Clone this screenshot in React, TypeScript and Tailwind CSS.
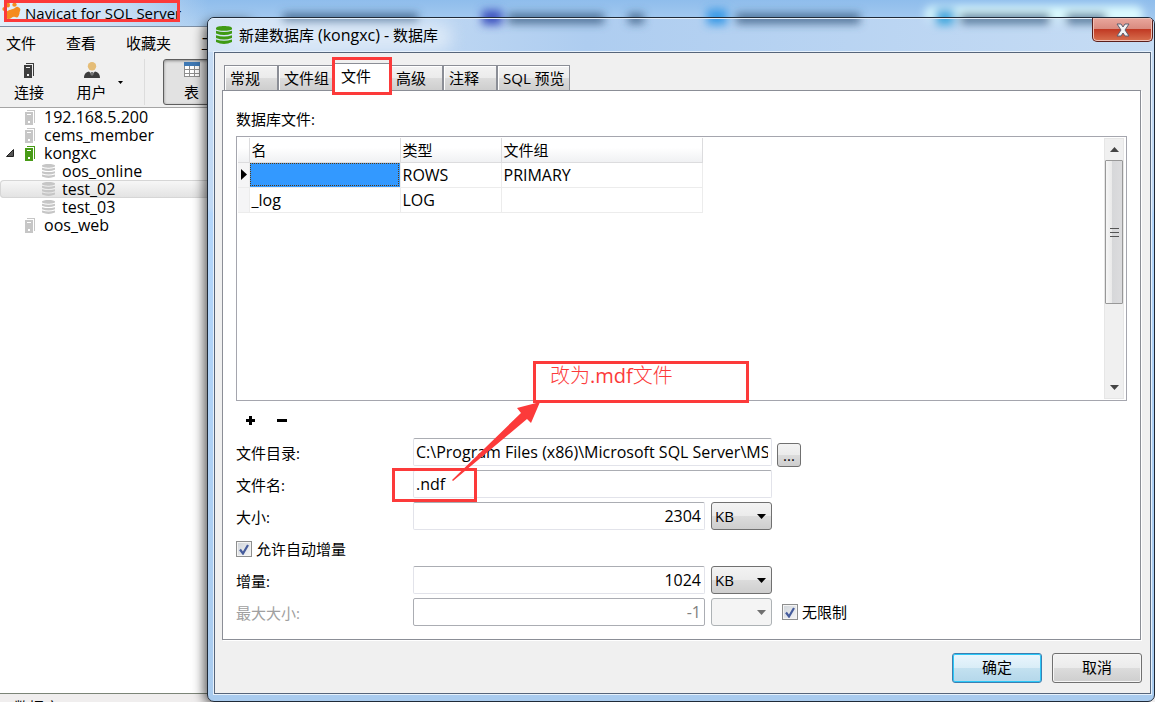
import React from 'react';
import clsx from 'clsx';

// --- Icons ---
const ServerIcon: React.FC<{ className?: string }> = ({ className }) => (
    <svg width="11" height="15" viewBox="0 0 11 15" className={clsx('shrink-0', className)} fill="currentColor">
        <path d="M2 0h8v13h-1V1H2z" />
        <path fillRule="evenodd" d="M0 2h8v13H0zM2 4v1h4V4zM3 11v2h2v-2z" />
    </svg>
);

const DatabaseIcon: React.FC<{ className?: string }> = ({ className }) => (
    <svg viewBox="0 0 16 18" preserveAspectRatio="none" className={clsx('shrink-0', className)} fill="currentColor">
        <path d="M0 2.200C0 -.7 16 -.7 16 2.200V3C16 5.400 0 5.400 0 3Z" />
        <path d="M0 4.800Q8 7.200 16 4.800V7.500Q8 10.500 0 7.500Z" />
        <path d="M0 9.200Q8 11.600 16 9.200V12Q8 15 0 12Z" />
        <path d="M0 13.600Q8 16 16 13.600V16Q8 19.800 0 16Z" />
    </svg>
);

const UserIcon = () => (
    <svg width="16" height="16" viewBox="0 0 16 16">
        <circle cx="8" cy="4.200" r="4.200" fill="#e5bd77" />
        <path d="M0 16c0-5 3-6 5-6.500l3 3 3-3c2 .5 5 1.500 5 6.500z" fill="#3d3d3d" />
        <path d="M7 10h2l1 2-2 2-2-2z" fill="#777" />
    </svg>
);

const TableIcon = () => (
    <svg width="16" height="15" viewBox="0 0 16 15" shapeRendering="crispEdges">
        <path d="M0 0h16v15H0z" fill="#8d8d8d" />
        <path d="M0 0h16v4H0z" fill="#3e78b4" />
        <path d="M1 4h4v3H1zM6 4h4v3H6zM11 4h4v3h-4zM1 8h4v3H1zM6 8h4v3H6zM11 8h4v3h-4zM1 12h4v2H1zM6 12h4v2H6zM11 12h4v2h-4z" fill="#fff" />
    </svg>
);

const LogoIcon = () => (
    <svg width="19" height="18" viewBox="0 0 19 18" className="shrink-0" fill="#f58b1f">
        <path d="M4 12c0-4 4-4 7-5s3-3 5-2 3 2 2 4 0 2-1 4-1 3-4 2-3 2-6 2-3-2-3-5z" />
        <ellipse cx="2.500" cy="7" rx="2.200" ry="2" />
        <ellipse cx="6" cy="3" rx="2" ry="2.500" />
        <ellipse cx="12.500" cy="2.800" rx="2.200" ry="2" />
    </svg>
);

const Caret: React.FC<{ className?: string }> = ({ className }) => (
    <svg width="9" height="5" viewBox="0 0 9 5" className={className} fill="currentColor">
        <path d="M0 0h9L4.500 5z" />
    </svg>
);

// Taskbar entries showing through the glass frame
const GlassSmears: React.FC<{ id: string; className: string; glow: number }> = ({ id, className, glow }) => (
    <svg width="1155" height="50" viewBox="0 0 1155 50" className={clsx('pointer-events-none absolute max-w-none', className)}>
        <defs>
            <filter id={id} filterUnits="userSpaceOnUse" x="0" y="-10" width="1155" height="60">
                <feGaussianBlur stdDeviation="4" />
            </filter>
        </defs>
        <g filter={`url(#${id})`}>
            <rect x="925" y="6" width="218" height="18" rx="8" fill="#dcfbff" opacity={glow} />
            <g fill="#34597f" opacity=".75">
                <rect x="283" y="13" width="135" height="11" />
                <rect x="508" y="13" width="96" height="11" />
                <rect x="628" y="13" width="16" height="11" />
                <rect x="736" y="13" width="124" height="11" />
                <rect x="960" y="13" width="90" height="11" />
                <rect x="1066" y="13" width="40" height="11" />
            </g>
            <rect x="482" y="10" width="20" height="15" fill="#3f55c0" />
            <rect x="707" y="9" width="20" height="16" fill="#3e9be6" />
            <rect x="935" y="9" width="20" height="16" fill="#45a9de" />
        </g>
    </svg>
);

// --- Main window ---
const MENUS = ['文件', '查看', '收藏夹', '工具'];

const TREE = [
    { name: '192.168.5.200', kind: 'server' },
    { name: 'cems_member', kind: 'server' },
    { name: 'kongxc', kind: 'server', open: true },
    { name: 'oos_online', kind: 'db' },
    { name: 'test_02', kind: 'db', selected: true },
    { name: 'test_03', kind: 'db' },
    { name: 'oos_web', kind: 'server' }
];

const MainWindow = () => (
    <div className="flex h-full flex-col">
        <div className="relative flex h-[27px] shrink-0 items-center gap-1 overflow-hidden border-b border-[#7d8fa5] bg-gradient-to-b from-[#8fbdec] to-[#aacdf0] pl-0.5">
            <GlassSmears id="smear-desktop" className="top-0 left-0" glow={1} />
            <div className="absolute top-0 left-0 h-full w-52 bg-gradient-to-r from-[#e3effa] via-[#cfe2f6] to-transparent"></div>
            <span className="relative pb-1"><LogoIcon /></span>
            <h1 className="relative text-[15px] leading-5 whitespace-nowrap">Navicat for SQL Server</h1>
        </div>
        <nav className="flex h-[31px] shrink-0 items-center gap-[30px] bg-[#f0f0f0] pl-1.5">
            {MENUS.map((m) => <button key={m} className="leading-5 whitespace-nowrap">{m}</button>)}
        </nav>
        <div className="flex h-[50px] shrink-0 items-start border-b border-[#a5a5a5] bg-[#f0f0f0] pt-px">
            <button className="flex h-[46px] w-[58px] flex-col items-center justify-between pt-1 pb-[3px]">
                <ServerIcon className="text-[#3d3d3d]" />
                <span className="leading-5">连接</span>
            </button>
            <button className="flex h-[46px] w-[67px] flex-col items-center justify-between pt-[3px] pb-[3px]">
                <UserIcon />
                <span className="leading-5">用户</span>
            </button>
            <button aria-label="用户菜单" className="-ml-2 flex h-[46px] w-7 items-center border-r border-[#dcdcdc] pl-px">
                <svg width="5" height="3" viewBox="0 0 5 3"><path d="M0 0h5L2.500 3z" /></svg>
            </button>
            <button className="ml-[18px] flex h-[46px] w-[57px] flex-col items-center justify-between rounded-[3px] border border-[#5e5e5e] bg-[#e2e2e2] pt-0.5 pb-0.5 shadow-[inset_0_1px_3px_#8a8a8a]">
                <TableIcon />
                <span className="leading-5">表</span>
            </button>
        </div>
        <ul className="flex-1 bg-white text-base">
            {TREE.map((node) => (
                <li
                    key={node.name}
                    className={clsx(
                        'flex h-[18px] items-center',
                        node.kind === 'db' ? 'gap-[7px] pl-[42px]' : 'pl-1.5',
                        node.selected && 'rounded-sm bg-gradient-to-b from-[#f8f8f8] to-[#e2e2e2] shadow-[inset_0_0_0_1px_#d6d6d6]'
                    )}
                >
                    {node.kind === 'db' ? (
                        <DatabaseIcon className="h-3.5 w-[13px] text-[#c6c6c6]" />
                    ) : (
                        <>
                            <span className="w-[19px]">
                                {node.open && <svg width="8" height="8" viewBox="0 0 8 8"><path d="M7.500.5v7h-7z" fill="#555" stroke="#222" /></svg>}
                            </span>
                            <ServerIcon className={clsx('mr-2', node.open ? 'text-[#489b17]' : 'text-[#c6c6c6]')} />
                        </>
                    )}
                    <span className="leading-[18px] whitespace-nowrap">{node.name}</span>
                </li>
            ))}
        </ul>
        <footer className="h-[9px] shrink-0 overflow-hidden border-t border-[#7c8578] bg-[#f0eeee] pt-[3px] pl-3.5 leading-5">数据库</footer>
    </div>
);

// --- Dialog ---
const TABS = ['常规', '文件组', '文件', '高级', '注释', 'SQL 预览'];
const TAB_WIDTHS = ['w-[54px]', 'w-[55px]', 'w-[57px]', 'w-[53px]', 'w-[54px]', 'w-[73px]'];
const FACE = 'bg-[linear-gradient(#f3f3f3,#ebebeb_50%,#dcdcdc_50%,#cecece)]';

const Tabs = () => (
    <div role="tablist" className="flex items-end pl-0.5">
        {TABS.map((t, i) => {
            const active = t === '文件';
            return (
                <button
                    key={t}
                    role="tab"
                    aria-selected={active}
                    className={clsx(
                        'border border-b-0 border-[#8b8e96] text-left leading-5 whitespace-nowrap',
                        TAB_WIDTHS[i],
                        active ? 'relative -mb-px h-7 bg-white pb-1 pl-[7px]' : ['h-[25px] pl-[5px] shadow-[inset_1px_1px_0_#fff]', FACE]
                    )}
                >
                    {t}
                </button>
            );
        })}
    </div>
);

const FileGrid = () => (
    <div className="flex min-h-0 flex-1 items-start border border-[#a5a6ae] p-px">
        <div className="flex-1">
            <table className="w-[464px] table-fixed border-collapse text-left">
                <colgroup>
                    <col className="w-[11px]" />
                    <col className="w-[151px]" />
                    <col className="w-[101px]" />
                    <col className="w-[201px]" />
                </colgroup>
                <thead>
                    <tr className="h-6 bg-gradient-to-b from-white from-40% to-[#f0f1f3] [&>th]:border-r [&>th]:border-b [&>th]:border-[#dcdcde] [&>th]:p-0 [&>th]:pl-0.5 [&>th]:font-normal">
                        <th></th>
                        <th>名</th>
                        <th>类型</th>
                        <th>文件组</th>
                    </tr>
                </thead>
                <tbody className="text-base [&_td]:border-r [&_td]:border-b [&_td]:border-[#ececec] [&_td]:p-0 [&_td]:pl-0.5 [&_td]:leading-5">
                    <tr className="h-[25px]">
                        <td className="bg-[#f5f5f6]"><svg width="7" height="11" viewBox="0 0 7 11" className="ml-px"><path d="M0 0l6 5.500L0 11z" /></svg></td>
                        <td className="bg-[#3399ff] outline-1 -outline-offset-2 outline-dotted outline-[#5b3a10]"></td>
                        <td>ROWS</td>
                        <td>PRIMARY</td>
                    </tr>
                    <tr className="h-[25px]">
                        <td className="bg-[#f5f5f6]"></td>
                        <td>_log</td>
                        <td>LOG</td>
                        <td></td>
                    </tr>
                </tbody>
            </table>
        </div>
        <div className="mr-px flex w-5 flex-col self-stretch border border-[#e6e6e6] bg-[#f0f0f0]">
            <button aria-label="向上" className="flex h-[21px] items-center justify-center"><Caret className="rotate-180 text-[#444]" /></button>
            <div className="flex h-36 flex-col items-center justify-center gap-[3px] rounded-[1px] border border-[#989898] bg-[linear-gradient(90deg,#f6f6f6,#eaeaea_35%,#d6d7d9_36%,#dcdcde)]">
                <i className="h-px w-[9px] bg-[#555]"></i>
                <i className="h-px w-[9px] bg-[#555]"></i>
                <i className="h-px w-[9px] bg-[#555]"></i>
            </div>
            <span className="flex-1"></span>
            <button aria-label="向下" className="flex h-[22px] items-center justify-center"><Caret className="text-[#444]" /></button>
        </div>
    </div>
);

const FIELD = 'h-7 rounded-[2px] border border-[#e2e3ea] border-t-[#abadb3] bg-white pr-[3px] pb-px pl-0.5 text-base';

const UnitSelect: React.FC<{ label: string; disabled?: boolean }> = ({ label, disabled }) => (
    <div className="grid w-[61px] items-center [&>*]:[grid-area:1/1]">
        <select
            aria-label={label}
            disabled={disabled}
            className={clsx('h-7 w-full appearance-none rounded-[3px] border pl-[3px] text-[15px]', disabled ? 'border-[#adb2b5] bg-[#f4f4f4]' : ['border-[#707070]', FACE])}
        >
            <option>{disabled ? '' : 'KB'}</option>
        </select>
        <Caret className={clsx('pointer-events-none mr-1.5 justify-self-end', disabled && 'text-[#707070]')} />
    </div>
);

const Check: React.FC<{ label: string }> = ({ label }) => (
    <label className="flex items-center gap-1">
        <span className="grid size-4 place-items-center [&>*]:[grid-area:1/1]">
            <input type="checkbox" defaultChecked className="peer size-4 appearance-none border border-[#8e8f8f] bg-gradient-to-br from-[#cfd4da] to-[#f6f6f6] shadow-[inset_0_0_0_1px_#f4f4f4]" />
            <svg width="10" height="11" viewBox="0 0 10 11" className="pointer-events-none hidden peer-checked:block">
                <path d="M1 5.500L4 9.500L9 1" fill="none" stroke="#465c9c" strokeWidth="2.200" />
            </svg>
        </span>
        <span className="leading-5">{label}</span>
    </label>
);

const FileForm = () => (
    <form className="flex flex-col gap-1 [&>div]:flex [&>div]:h-7 [&>div]:items-center [&>div>label:first-child]:w-[177px] [&>div>label:first-child]:pt-0.5">
        <div>
            <label htmlFor="dir">文件目录:</label>
            <input id="dir" className={clsx(FIELD, 'w-[359px]')} defaultValue="C:\Program Files (x86)\Microsoft SQL Server\MSSQL" />
            <button type="button" aria-label="浏览" className={clsx('ml-[5px] mt-1.5 h-6 w-6 rounded-[3px] border border-[#707070] leading-5', FACE)}>...</button>
        </div>
        <div>
            <label htmlFor="name">文件名:</label>
            <input id="name" className={clsx(FIELD, 'w-[359px]')} defaultValue=".ndf" />
        </div>
        <div>
            <label htmlFor="size">大小:</label>
            <input id="size" className={clsx(FIELD, 'mr-1.5 w-[292px] text-right')} defaultValue="2304" />
            <UnitSelect label="大小单位" />
        </div>
        <div><Check label="允许自动增量" /></div>
        <div>
            <label htmlFor="grow">增量:</label>
            <input id="grow" className={clsx(FIELD, 'mr-1.5 w-[292px] text-right')} defaultValue="1024" />
            <UnitSelect label="增量单位" />
        </div>
        <div>
            <label htmlFor="max" className="text-[#a0a0a0]">最大大小:</label>
            <input id="max" disabled className="mr-1.5 h-7 w-[292px] rounded-[2px] border border-[#abadb3] bg-white px-[3px] pb-px text-right text-base text-[#808080]" defaultValue="-1" />
            <UnitSelect label="最大大小单位" disabled />
            <span className="ml-2.5"><Check label="无限制" /></span>
        </div>
    </form>
);

const NewDatabaseDialog = () => (
    <section className="absolute top-[17px] right-0 bottom-0 left-[207px] flex flex-col overflow-hidden rounded-[7px] border border-[#1f2a38] bg-[linear-gradient(#c7dcf3,#c0d9f5_190px,#b3d6fb_195px,#a9cbee)] pr-[3px] pb-[7px] pl-1.5">
        <div className="absolute top-0 right-0 left-0 h-[34px] overflow-hidden border-t border-[#e3eefa] bg-gradient-to-r from-[#d4e4f5] via-[#aecdf0] via-40% to-[#c6dcf4]">
            <GlassSmears id="smear-dialog" className="-top-[19px] -left-[208px]" glow={0.4} />
            <div className="absolute top-1 left-5 h-7 w-56 rounded-full bg-[#dce9f7] blur-sm"></div>
        </div>
        <header className="relative flex h-[34px] shrink-0 items-start">
            <DatabaseIcon className="mt-2 ml-0.5 h-[18px] w-4 text-[#3f9a13]" />
            <h2 className="mt-[7px] ml-[7px] leading-5 whitespace-nowrap">新建数据库 <span className="text-base leading-5">(kongxc) -</span> 数据库</h2>
            <button aria-label="关闭" className="mr-[-2px] ml-auto flex h-6 w-[61px] items-center justify-center rounded-b-[5px] border border-t-0 border-[#5b1f1c] bg-[linear-gradient(#e9a79d,#d98a7e_48%,#c13a24_50%,#d8704f)] shadow-[inset_0_0_0_1px_#f0c0b5]">
                <svg width="16" height="14" viewBox="0 0 16 14">
                    <path d="M2 1h4l2 3 2-3h4l-4 6 4 6h-4L8 10l-2 3H2l4-6z" fill="#f4f4f4" stroke="#5b5f70" />
                </svg>
            </button>
        </header>
        <div className="relative flex min-h-0 flex-1 flex-col border border-[#56657a] bg-[#f0f0f0] pr-[9px] pt-2.5 pl-[7px] shadow-[0_0_0_1px_#e6f1fc]">
            <Tabs />
            <div className="flex min-h-0 flex-1 flex-col border border-[#8b8e96] bg-white px-[13px] pt-[18px] pb-[13px] shadow-[1px_1px_0_#fff]">
                <p className="mb-[7px] leading-5">数据库文件:</p>
                <FileGrid />
                <div className="flex h-[37px] shrink-0 items-center gap-[22px] pt-0.5 pl-2.5">
                    <button aria-label="添加"><svg width="9" height="9" viewBox="0 0 9 9"><path d="M3 0h3v3h3v3H6v3H3V6H0V3h3z" /></svg></button>
                    <button aria-label="删除"><svg width="10" height="9" viewBox="0 0 10 9"><path d="M0 3h10v3H0z" /></svg></button>
                </div>
                <FileForm />
            </div>
            <div className="-mr-px flex shrink-0 justify-end gap-2.5 pt-[13px] pb-2.5">
                <button className="h-[30px] w-[90px] rounded-[3px] border border-[#3c7fb1] bg-[linear-gradient(#eaf6fd,#d9edf7_50%,#c3e1f0_50%,#b4d7ea)] pb-0.5 shadow-[inset_0_0_0_1px_#2bc8f8]">确定</button>
                <button className={clsx('h-[30px] w-[90px] rounded-[3px] border border-[#707070] pb-0.5 shadow-[inset_0_0_0_1px_#f6f6f6]', FACE)}>取消</button>
            </div>
        </div>
    </section>
);

// --- Red markup over the windows ---
const Annotations = () => (
    <div className="pointer-events-none">
        <div className="absolute top-0 left-1 h-[22px] w-[176px] border-[3px] border-[#fc3a3a]"></div>
        <div className="absolute top-[57px] left-[332px] h-[38px] w-[60px] border-[3px] border-[#fc3a3a]"></div>
        <div className="absolute top-[468px] left-[392px] h-[34px] w-[85px] border-[3px] border-[#fc3a3a]"></div>
        <div className="absolute top-[361px] left-[533px] h-[42px] w-[216px] border-[3px] border-[#fc3a3a] pl-[14px] text-xl leading-6 text-[#fc3a3a]">
            <span className="font-light">改为</span>.mdf<span className="font-light">文件</span>
        </div>
        <svg width="90" height="80" viewBox="0 0 90 80" className="absolute top-[402px] left-[451px]">
            <path d="M1 78L70 11L66 6L89 0L80 21L76 17L2 79z" fill="#fc3a3a" />
        </svg>
    </div>
);

export default function App() {
    return (
        <main className="relative h-screen overflow-hidden bg-white font-['Open_Sans','Noto_Sans_CJK_SC',sans-serif] text-[15px] text-black">
            <MainWindow />
            <div className="absolute top-6 bottom-0 left-[207px] w-10 rounded-l-lg shadow-[0_0_12px_3px_rgba(0,0,0,0.65)]"></div>
            <NewDatabaseDialog />
            <Annotations />
        </main>
    );
}
